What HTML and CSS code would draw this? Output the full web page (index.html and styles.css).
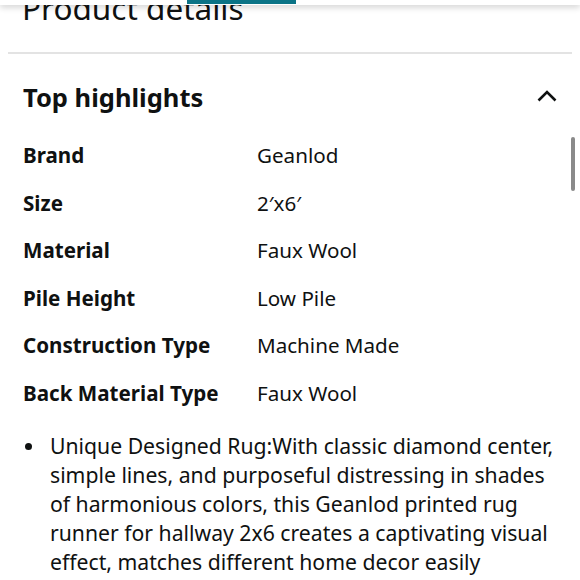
FILE: index.html
```html
<!DOCTYPE html>
<html lang="en">
<head>
<meta charset="utf-8">
<title>Product details</title>
<link rel="stylesheet" href="styles.css">
</head>
<body>
<div class="topbar"><div class="tab"></div></div>
<h1 class="title">Product details</h1>
<hr class="divider">
<section class="highlights">
  <div class="hl-head">
    <h2>Top highlights</h2>
    <svg class="chev" width="20" height="13" viewBox="0 0 20 13"><polyline points="1.5,11.5 10,3 18.5,11.5" fill="none" stroke="#0f1111" stroke-width="2.6"/></svg>
  </div>
  <div class="specs">
    <div class="row"><span class="lbl">Brand</span><span class="val">Geanlod</span></div>
    <div class="row"><span class="lbl">Size</span><span class="val">2′x6′</span></div>
    <div class="row"><span class="lbl">Material</span><span class="val">Faux Wool</span></div>
    <div class="row"><span class="lbl">Pile Height</span><span class="val">Low Pile</span></div>
    <div class="row"><span class="lbl">Construction Type</span><span class="val">Machine Made</span></div>
    <div class="row"><span class="lbl">Back Material Type</span><span class="val">Faux Wool</span></div>
  </div>
  <ul class="bullets">
    <li class="item"><span class="dot"></span><span class="txt">Unique Designed Rug:With classic diamond center, simple lines, and purposeful distressing in shades of harmonious colors, this Geanlod printed rug runner for hallway 2x6 creates a captivating visual effect, matches different home decor easily</span></li>
  </ul>
</section>
<div class="scrollbar"></div>
</body>
</html>
```
FILE: styles.css
```css
html, body {
  margin: 0;
  padding: 0;
  background: #fff;
  overflow: hidden;
  height: 580px;
}
body {
  font-family: "Noto Sans", "Open Sans", sans-serif;
  color: #0f1111;
  position: relative;
}
.topbar {
  position: absolute;
  top: 0;
  left: 0;
  right: 0;
  height: 5px;
  background: #fff;
  box-shadow: 0 2px 6px rgba(0,0,0,0.22);
  z-index: 2;
  display: flex;
}
.tab {
  margin-left: 187px;
  width: 109px;
  height: 4px;
  background: #0a7386;
}
.title {
  margin: -10px 0 0 22px;
  font-size: 31.5px;
  line-height: 36px;
  font-weight: 400;
}
.divider {
  margin: 26px 8px 0 8px;
  border: 0;
  height: 2px;
  background: #e3e3e3;
}
.highlights {
  padding: 0 23px;
}
.hl-head {
  display: flex;
  justify-content: space-between;
  align-items: center;
  margin-top: 23px;
  height: 40px;
}
.hl-head h2 {
  margin: 0;
  font-size: 25.5px;
  line-height: 40px;
  font-weight: 700;
}
.chev {
  display: block;
  margin-top: -4px;
}
.specs {
  margin-top: 15px;
}
.row {
  display: grid;
  grid-template-columns: 234px 1fr;
  height: 47.5px;
  line-height: 47.5px;
  font-size: 20.6px;
}
.lbl {
  font-weight: 700;
}
.val {
  font-weight: 400;
}
.bullets {
  list-style: none;
  margin: 14px 0 0 0;
  padding: 0;
}
.item {
  display: flex;
  font-size: 21.2px;
  line-height: 29px;
}
.dot {
  flex: none;
  width: 7px;
  height: 7px;
  border-radius: 50%;
  background: #0f1111;
  margin: 12px 18px 0 2px;
}
.scrollbar {
  position: absolute;
  top: 137px;
  right: 5px;
  width: 4px;
  height: 54px;
  border-radius: 2px;
  background: #8a8a8a;
}
```
